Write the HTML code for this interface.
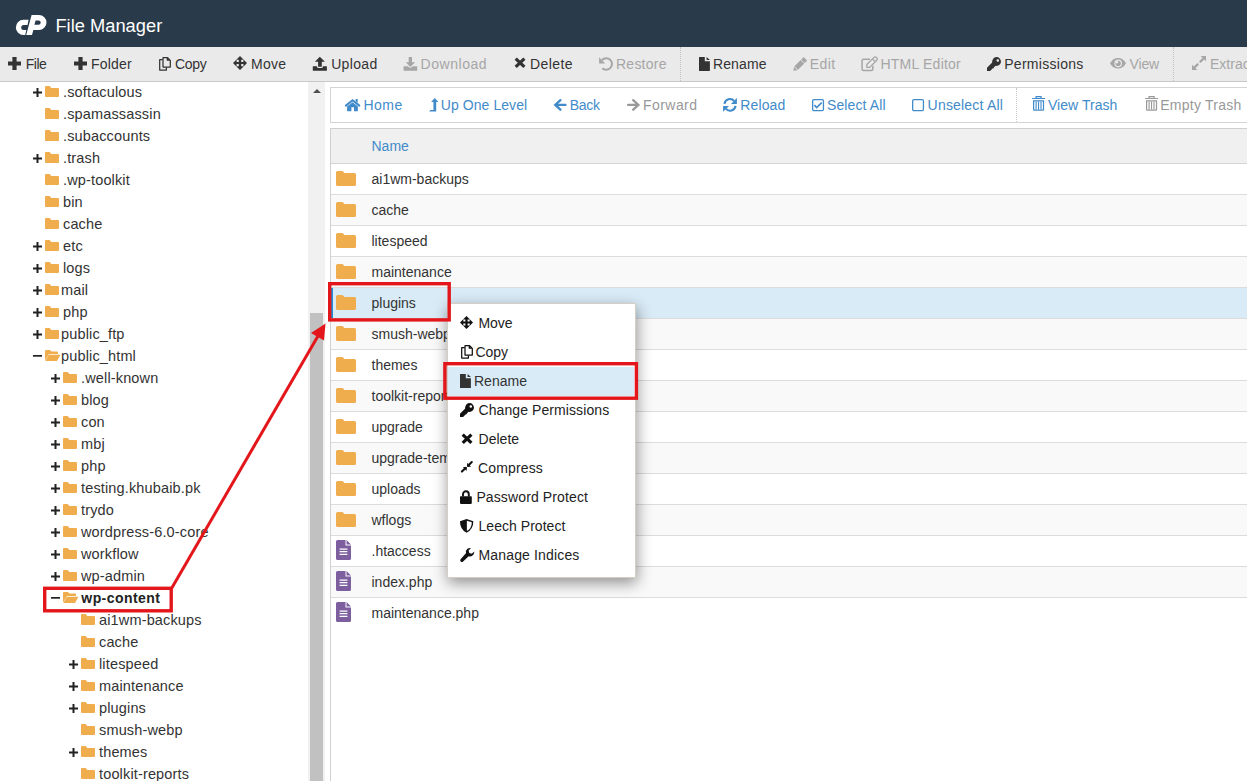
<!DOCTYPE html><html><head><meta charset="utf-8"><style>html,body{margin:0;padding:0}body{width:1247px;height:781px;overflow:hidden;position:relative;background:#fff}</style></head><body><div style="position:absolute;left:0;top:0;width:1247px;height:47px;background:#293a4a"></div><div style="position:absolute;left:55.40px;top:15px;font:normal 18.3px 'Liberation Sans', sans-serif;line-height:21px;color:#fff;white-space:nowrap;letter-spacing:0.014px">File Manager</div><svg style="position:absolute;left:12px;top:10px;overflow:visible" width="40" height="30" viewBox="0 0 40 30" fill="#333" stroke="none"><path d="M16.6 9.8L11.45 9.8A7.6 7.6 0 0 0 11.45 25L13.2 25L14.35 20L11.7 20A2.5 2.5 0 0 1 11.7 15L15.5 15Z" fill="#fff"/><path d="M19.6 5L27 5A7.5 7.5 0 0 1 27 20L21.35 20L20 25L14.2 25Z M23.6 10.4L26.5 10.4A2.2 2.2 0 0 1 26.5 14.8L22.4 14.8Z" fill="#fff" fill-rule="evenodd"/></svg><div style="position:absolute;left:0;top:47px;width:1247px;height:34px;background:#eaeaea;border-bottom:1px solid #c9c9c9"></div><svg style="position:absolute;left:7.9px;top:56.7px;overflow:visible" width="13" height="13" viewBox="0 0 13 13" fill="#333" stroke="none"><path d="M4.4 0H8.6V4.4H13V8.6H8.6V13H4.4V8.6H0V4.4H4.4Z" fill="#333"/></svg><div style="position:absolute;left:25.80px;top:56px;font:normal 14px 'Liberation Sans', sans-serif;line-height:16px;color:#333;white-space:nowrap;letter-spacing:-0.540px">File</div><svg style="position:absolute;left:73.9px;top:56.7px;overflow:visible" width="13" height="13" viewBox="0 0 13 13" fill="#333" stroke="none"><path d="M4.4 0H8.6V4.4H13V8.6H8.6V13H4.4V8.6H0V4.4H4.4Z" fill="#333"/></svg><div style="position:absolute;left:91.00px;top:56px;font:normal 14px 'Liberation Sans', sans-serif;line-height:16px;color:#333;white-space:nowrap;letter-spacing:0.180px">Folder</div><svg style="position:absolute;left:158px;top:56px;overflow:visible" width="14" height="16" viewBox="0 0 14 16" fill="#333" stroke="none"><path d="M5 1.7H9.6L12.3 4.4V11H5Z M9.3 1.7V4.2H12.3" fill="none" stroke="#333" stroke-width="1.25" stroke-linejoin="round"/><path d="M4.7 3.7H1.7V14.1H8.4V11.4" fill="none" stroke="#333" stroke-width="1.25" stroke-linejoin="round"/></svg><div style="position:absolute;left:175.00px;top:56px;font:normal 14px 'Liberation Sans', sans-serif;line-height:16px;color:#333;white-space:nowrap;letter-spacing:-0.300px">Copy</div><svg style="position:absolute;left:233.3px;top:56.1px;overflow:visible" width="14" height="14" viewBox="0 0 14 14" fill="#333" stroke="none"><path transform="scale(1.0)" fill-rule="evenodd" fill="#333" d="M7 0L14 7L7 14L0 7Z M3.6 3.8H5.8V6H3.6Z M8.2 3.8H10.4V6H8.2Z M3.6 8H5.8V10.2H3.6Z M8.2 8H10.4V10.2H8.2Z"/></svg><div style="position:absolute;left:251.00px;top:56px;font:normal 14px 'Liberation Sans', sans-serif;line-height:16px;color:#333;white-space:nowrap;letter-spacing:0.300px">Move</div><svg style="position:absolute;left:312px;top:56px;overflow:visible" width="15" height="15" viewBox="0 0 15 15" fill="#333" stroke="none"><path fill="#333" d="M7.8 0.8L12.9 5.7H2.9Z M6.1 5.5H9.8V10.8H6.1Z M0.8 10.3H5.1V11Q5.1 12 6.1 12H9.8Q10.8 12 10.8 11V10.3H14.9V14.7H0.8Z"/></svg><div style="position:absolute;left:331.20px;top:56px;font:normal 14px 'Liberation Sans', sans-serif;line-height:16px;color:#333;white-space:nowrap;letter-spacing:0.324px">Upload</div><svg style="position:absolute;left:403px;top:56px;overflow:visible" width="15" height="15" viewBox="0 0 15 15" fill="#333" stroke="none"><path fill="#a6a6a6" d="M5.7 1.1H9V6.2H12.1L7.4 10.9L2.7 6.2H5.7Z M0.6 10.3H4.7L7.4 12L10.1 10.3H14.2V14.7H0.6Z"/></svg><div style="position:absolute;left:420.60px;top:56px;font:normal 14px 'Liberation Sans', sans-serif;line-height:16px;color:#a6a6a6;white-space:nowrap;letter-spacing:0.542px">Download</div><svg style="position:absolute;left:514.4px;top:57.1px;overflow:visible" width="12" height="12" viewBox="0 0 12 12" fill="#333" stroke="none"><path d="M1.7 1.6L10.4 9.9 M10.4 1.6L1.7 9.9" fill="none" stroke="#333" stroke-width="3.2" /></svg><div style="position:absolute;left:530.00px;top:56px;font:normal 14px 'Liberation Sans', sans-serif;line-height:16px;color:#333;white-space:nowrap;letter-spacing:0.432px">Delete</div><svg style="position:absolute;left:599px;top:56.5px;overflow:visible" width="14" height="15" viewBox="0 0 14 15" fill="#333" stroke="none"><path fill="#a6a6a6" d="M0.1 0.3V6.4H6.2Z"/><path d="M3 3A5.8 5.8 0 1 1 3.3 11.3" fill="none" stroke="#a6a6a6" stroke-width="2" /></svg><div style="position:absolute;left:616.00px;top:56px;font:normal 14px 'Liberation Sans', sans-serif;line-height:16px;color:#a6a6a6;white-space:nowrap;letter-spacing:0.240px">Restore</div><svg style="position:absolute;left:698.5px;top:56.8px;overflow:visible" width="11" height="14" viewBox="0 0 11 14" fill="#333" stroke="none"><path fill="#333" d="M0 0.3Q0 0 .3 0H5.8V4.3H10.9V13.6Q10.9 13.9 10.6 13.9H.3Q0 13.9 0 13.6Z M7.6 0L10.9 3.1H7.6Z"/></svg><div style="position:absolute;left:712.90px;top:56px;font:normal 14px 'Liberation Sans', sans-serif;line-height:16px;color:#333;white-space:nowrap;letter-spacing:0.144px">Rename</div><svg style="position:absolute;left:792.9px;top:56.8px;overflow:visible" width="14" height="14" viewBox="0 0 14 14" fill="#333" stroke="none"><g transform="translate(0.4 13.8) rotate(-45)" fill="#a6a6a6"><path d="M0 0L3.4 -2.5V2.5Z"/><rect x="4.0" y="-2.5" width="8.8" height="5"/><rect x="13.4" y="-2.5" width="3.6" height="5" rx="1"/></g></svg><div style="position:absolute;left:809.70px;top:56px;font:normal 14px 'Liberation Sans', sans-serif;line-height:16px;color:#a6a6a6;white-space:nowrap;letter-spacing:0.420px">Edit</div><svg style="position:absolute;left:861px;top:56.5px;overflow:visible" width="16" height="15" viewBox="0 0 16 15" fill="#333" stroke="none"><path d="M9 2.35H2.5Q1.05 2.35 1.05 3.8V12Q1.05 13.45 2.5 13.45H10.4Q11.85 13.45 11.85 12V8.8" fill="none" stroke="#a6a6a6" stroke-width="1.5" /><g transform="translate(5.4 10.8) rotate(-45)"><path d="M0.6 0L2.6 -2H12.4A2 2 0 0 1 12.4 2H2.6Z M10.6 -2V2" fill="none" stroke="#a6a6a6" stroke-width="1.3" stroke-linejoin="round"/></g></svg><div style="position:absolute;left:880.40px;top:56px;font:normal 14px 'Liberation Sans', sans-serif;line-height:16px;color:#a6a6a6;white-space:nowrap;letter-spacing:0.234px">HTML Editor</div><svg style="position:absolute;left:987px;top:56.8px;overflow:visible" width="14" height="14" viewBox="0 0 14 14" fill="#333" stroke="none"><circle cx="9.55" cy="4.5" r="4.4" fill="#333"/><circle cx="10.8" cy="3.6" r="1.25" fill="#eaeaea"/><path fill="#333" d="M0 10.8L6.2 4.6L9.4 7.8L6.8 10.4V11.2H5.8L3.1 13.9H0Z"/></svg><div style="position:absolute;left:1004.20px;top:56px;font:normal 14px 'Liberation Sans', sans-serif;line-height:16px;color:#333;white-space:nowrap;letter-spacing:0.288px">Permissions</div><svg style="position:absolute;left:1109.8px;top:58.4px;overflow:visible" width="16" height="11" viewBox="0 0 16 11" fill="#333" stroke="none"><path fill="#a6a6a6" d="M0 5.25Q3 0 8 0Q13 0 16 5.25Q13 10.5 8 10.5Q3 10.5 0 5.25Z"/><circle cx="8.2" cy="5.4" r="3.8" fill="#eaeaea"/><circle cx="8.2" cy="5.4" r="2.6" fill="#a6a6a6"/><circle cx="7" cy="4.2" r="1.2" fill="#eaeaea"/></svg><div style="position:absolute;left:1129.50px;top:56px;font:normal 14px 'Liberation Sans', sans-serif;line-height:16px;color:#a6a6a6;white-space:nowrap;letter-spacing:-0.120px">View</div><svg style="position:absolute;left:1191.8px;top:56.1px;overflow:visible" width="14" height="14" viewBox="0 0 14 14" fill="#333" stroke="none"><path fill="#a6a6a6" d="M14 0V5.3L8.7 0Z M0 14V8.7L5.3 14Z"/><path d="M11.3 2.7L8.4 5.6 M2.7 11.3L5.6 8.4" fill="none" stroke="#a6a6a6" stroke-width="2.2" stroke-linecap="round"/></svg><div style="position:absolute;left:1210.00px;top:56px;font:normal 14px 'Liberation Sans', sans-serif;line-height:16px;color:#a6a6a6;white-space:nowrap;letter-spacing:0.000px">Extract</div><div style="position:absolute;left:680px;top:47px;width:0;height:34px;border-left:1px dotted #c0c0c0"></div><div style="position:absolute;left:1173px;top:47px;width:0;height:34px;border-left:1px dotted #c0c0c0"></div><svg style="position:absolute;left:32.8px;top:87.8px;overflow:visible" width="9" height="9" viewBox="0 0 9 9" fill="#333" stroke="none"><path d="M3.5 0H5.5V3.5H9V5.5H5.5V9H3.5V5.5H0V3.5H3.5Z" fill="#222"/></svg><svg style="position:absolute;left:45px;top:86.3px;overflow:visible" width="14" height="11" viewBox="0 0 14 11" fill="#333" stroke="none"><path fill="#f0ad4e" d="M0 1Q0 0 1 0H4.6L6.4 1.9H13Q14 1.9 14 2.9V10Q14 11 13 11H1Q0 11 0 10Z"/></svg><div style="position:absolute;left:63.00px;top:84px;font:normal 14.5px 'Liberation Sans', sans-serif;line-height:16px;color:#333;white-space:nowrap;letter-spacing:0.150px">.softaculous</div><svg style="position:absolute;left:45px;top:108.3px;overflow:visible" width="14" height="11" viewBox="0 0 14 11" fill="#333" stroke="none"><path fill="#f0ad4e" d="M0 1Q0 0 1 0H4.6L6.4 1.9H13Q14 1.9 14 2.9V10Q14 11 13 11H1Q0 11 0 10Z"/></svg><div style="position:absolute;left:63.00px;top:106px;font:normal 14.5px 'Liberation Sans', sans-serif;line-height:16px;color:#333;white-space:nowrap;letter-spacing:0.150px">.spamassassin</div><svg style="position:absolute;left:45px;top:130.3px;overflow:visible" width="14" height="11" viewBox="0 0 14 11" fill="#333" stroke="none"><path fill="#f0ad4e" d="M0 1Q0 0 1 0H4.6L6.4 1.9H13Q14 1.9 14 2.9V10Q14 11 13 11H1Q0 11 0 10Z"/></svg><div style="position:absolute;left:63.00px;top:128px;font:normal 14.5px 'Liberation Sans', sans-serif;line-height:16px;color:#333;white-space:nowrap;letter-spacing:0.150px">.subaccounts</div><svg style="position:absolute;left:32.8px;top:153.8px;overflow:visible" width="9" height="9" viewBox="0 0 9 9" fill="#333" stroke="none"><path d="M3.5 0H5.5V3.5H9V5.5H5.5V9H3.5V5.5H0V3.5H3.5Z" fill="#222"/></svg><svg style="position:absolute;left:45px;top:152.3px;overflow:visible" width="14" height="11" viewBox="0 0 14 11" fill="#333" stroke="none"><path fill="#f0ad4e" d="M0 1Q0 0 1 0H4.6L6.4 1.9H13Q14 1.9 14 2.9V10Q14 11 13 11H1Q0 11 0 10Z"/></svg><div style="position:absolute;left:63.00px;top:150px;font:normal 14.5px 'Liberation Sans', sans-serif;line-height:16px;color:#333;white-space:nowrap;letter-spacing:0.150px">.trash</div><svg style="position:absolute;left:45px;top:174.3px;overflow:visible" width="14" height="11" viewBox="0 0 14 11" fill="#333" stroke="none"><path fill="#f0ad4e" d="M0 1Q0 0 1 0H4.6L6.4 1.9H13Q14 1.9 14 2.9V10Q14 11 13 11H1Q0 11 0 10Z"/></svg><div style="position:absolute;left:63.00px;top:172px;font:normal 14.5px 'Liberation Sans', sans-serif;line-height:16px;color:#333;white-space:nowrap;letter-spacing:0.150px">.wp-toolkit</div><svg style="position:absolute;left:45px;top:196.3px;overflow:visible" width="14" height="11" viewBox="0 0 14 11" fill="#333" stroke="none"><path fill="#f0ad4e" d="M0 1Q0 0 1 0H4.6L6.4 1.9H13Q14 1.9 14 2.9V10Q14 11 13 11H1Q0 11 0 10Z"/></svg><div style="position:absolute;left:63.00px;top:194px;font:normal 14.5px 'Liberation Sans', sans-serif;line-height:16px;color:#333;white-space:nowrap;letter-spacing:0.150px">bin</div><svg style="position:absolute;left:45px;top:218.3px;overflow:visible" width="14" height="11" viewBox="0 0 14 11" fill="#333" stroke="none"><path fill="#f0ad4e" d="M0 1Q0 0 1 0H4.6L6.4 1.9H13Q14 1.9 14 2.9V10Q14 11 13 11H1Q0 11 0 10Z"/></svg><div style="position:absolute;left:63.00px;top:216px;font:normal 14.5px 'Liberation Sans', sans-serif;line-height:16px;color:#333;white-space:nowrap;letter-spacing:0.150px">cache</div><svg style="position:absolute;left:32.8px;top:241.8px;overflow:visible" width="9" height="9" viewBox="0 0 9 9" fill="#333" stroke="none"><path d="M3.5 0H5.5V3.5H9V5.5H5.5V9H3.5V5.5H0V3.5H3.5Z" fill="#222"/></svg><svg style="position:absolute;left:45px;top:240.3px;overflow:visible" width="14" height="11" viewBox="0 0 14 11" fill="#333" stroke="none"><path fill="#f0ad4e" d="M0 1Q0 0 1 0H4.6L6.4 1.9H13Q14 1.9 14 2.9V10Q14 11 13 11H1Q0 11 0 10Z"/></svg><div style="position:absolute;left:63.00px;top:238px;font:normal 14.5px 'Liberation Sans', sans-serif;line-height:16px;color:#333;white-space:nowrap;letter-spacing:0.150px">etc</div><svg style="position:absolute;left:32.8px;top:263.8px;overflow:visible" width="9" height="9" viewBox="0 0 9 9" fill="#333" stroke="none"><path d="M3.5 0H5.5V3.5H9V5.5H5.5V9H3.5V5.5H0V3.5H3.5Z" fill="#222"/></svg><svg style="position:absolute;left:45px;top:262.3px;overflow:visible" width="14" height="11" viewBox="0 0 14 11" fill="#333" stroke="none"><path fill="#f0ad4e" d="M0 1Q0 0 1 0H4.6L6.4 1.9H13Q14 1.9 14 2.9V10Q14 11 13 11H1Q0 11 0 10Z"/></svg><div style="position:absolute;left:63.00px;top:260px;font:normal 14.5px 'Liberation Sans', sans-serif;line-height:16px;color:#333;white-space:nowrap;letter-spacing:0.150px">logs</div><svg style="position:absolute;left:32.8px;top:285.8px;overflow:visible" width="9" height="9" viewBox="0 0 9 9" fill="#333" stroke="none"><path d="M3.5 0H5.5V3.5H9V5.5H5.5V9H3.5V5.5H0V3.5H3.5Z" fill="#222"/></svg><svg style="position:absolute;left:45px;top:284.3px;overflow:visible" width="14" height="11" viewBox="0 0 14 11" fill="#333" stroke="none"><path fill="#f0ad4e" d="M0 1Q0 0 1 0H4.6L6.4 1.9H13Q14 1.9 14 2.9V10Q14 11 13 11H1Q0 11 0 10Z"/></svg><div style="position:absolute;left:61.00px;top:282px;font:normal 14.5px 'Liberation Sans', sans-serif;line-height:16px;color:#333;white-space:nowrap;letter-spacing:0.150px">mail</div><svg style="position:absolute;left:32.8px;top:307.8px;overflow:visible" width="9" height="9" viewBox="0 0 9 9" fill="#333" stroke="none"><path d="M3.5 0H5.5V3.5H9V5.5H5.5V9H3.5V5.5H0V3.5H3.5Z" fill="#222"/></svg><svg style="position:absolute;left:45px;top:306.3px;overflow:visible" width="14" height="11" viewBox="0 0 14 11" fill="#333" stroke="none"><path fill="#f0ad4e" d="M0 1Q0 0 1 0H4.6L6.4 1.9H13Q14 1.9 14 2.9V10Q14 11 13 11H1Q0 11 0 10Z"/></svg><div style="position:absolute;left:63.00px;top:304px;font:normal 14.5px 'Liberation Sans', sans-serif;line-height:16px;color:#333;white-space:nowrap;letter-spacing:0.150px">php</div><svg style="position:absolute;left:32.8px;top:329.8px;overflow:visible" width="9" height="9" viewBox="0 0 9 9" fill="#333" stroke="none"><path d="M3.5 0H5.5V3.5H9V5.5H5.5V9H3.5V5.5H0V3.5H3.5Z" fill="#222"/></svg><svg style="position:absolute;left:45px;top:328.3px;overflow:visible" width="14" height="11" viewBox="0 0 14 11" fill="#333" stroke="none"><path fill="#f0ad4e" d="M0 1Q0 0 1 0H4.6L6.4 1.9H13Q14 1.9 14 2.9V10Q14 11 13 11H1Q0 11 0 10Z"/></svg><div style="position:absolute;left:61.00px;top:326px;font:normal 14.5px 'Liberation Sans', sans-serif;line-height:16px;color:#333;white-space:nowrap;letter-spacing:0.150px">public_ftp</div><svg style="position:absolute;left:32.8px;top:354.8px;overflow:visible" width="9" height="2" viewBox="0 0 9 2" fill="#333" stroke="none"><rect width="9" height="1.7" fill="#222"/></svg><svg style="position:absolute;left:45px;top:350.3px;overflow:visible" width="16" height="11" viewBox="0 0 16 11" fill="#333" stroke="none"><path fill="#f0ad4e" d="M0 1Q0 0 1 0H5L6.5 1.5H12Q13 1.5 13 2.5V4H4L0 10.5Z M3.8 4.8H15.5L12 11H0.3Z"/></svg><div style="position:absolute;left:61.00px;top:348px;font:normal 14.5px 'Liberation Sans', sans-serif;line-height:16px;color:#333;white-space:nowrap;letter-spacing:0.150px">public_html</div><svg style="position:absolute;left:50.8px;top:373.8px;overflow:visible" width="9" height="9" viewBox="0 0 9 9" fill="#333" stroke="none"><path d="M3.5 0H5.5V3.5H9V5.5H5.5V9H3.5V5.5H0V3.5H3.5Z" fill="#222"/></svg><svg style="position:absolute;left:63px;top:372.3px;overflow:visible" width="14" height="11" viewBox="0 0 14 11" fill="#333" stroke="none"><path fill="#f0ad4e" d="M0 1Q0 0 1 0H4.6L6.4 1.9H13Q14 1.9 14 2.9V10Q14 11 13 11H1Q0 11 0 10Z"/></svg><div style="position:absolute;left:81.00px;top:370px;font:normal 14.5px 'Liberation Sans', sans-serif;line-height:16px;color:#333;white-space:nowrap;letter-spacing:0.150px">.well-known</div><svg style="position:absolute;left:50.8px;top:395.8px;overflow:visible" width="9" height="9" viewBox="0 0 9 9" fill="#333" stroke="none"><path d="M3.5 0H5.5V3.5H9V5.5H5.5V9H3.5V5.5H0V3.5H3.5Z" fill="#222"/></svg><svg style="position:absolute;left:63px;top:394.3px;overflow:visible" width="14" height="11" viewBox="0 0 14 11" fill="#333" stroke="none"><path fill="#f0ad4e" d="M0 1Q0 0 1 0H4.6L6.4 1.9H13Q14 1.9 14 2.9V10Q14 11 13 11H1Q0 11 0 10Z"/></svg><div style="position:absolute;left:81.00px;top:392px;font:normal 14.5px 'Liberation Sans', sans-serif;line-height:16px;color:#333;white-space:nowrap;letter-spacing:0.150px">blog</div><svg style="position:absolute;left:50.8px;top:417.8px;overflow:visible" width="9" height="9" viewBox="0 0 9 9" fill="#333" stroke="none"><path d="M3.5 0H5.5V3.5H9V5.5H5.5V9H3.5V5.5H0V3.5H3.5Z" fill="#222"/></svg><svg style="position:absolute;left:63px;top:416.3px;overflow:visible" width="14" height="11" viewBox="0 0 14 11" fill="#333" stroke="none"><path fill="#f0ad4e" d="M0 1Q0 0 1 0H4.6L6.4 1.9H13Q14 1.9 14 2.9V10Q14 11 13 11H1Q0 11 0 10Z"/></svg><div style="position:absolute;left:81.00px;top:414px;font:normal 14.5px 'Liberation Sans', sans-serif;line-height:16px;color:#333;white-space:nowrap;letter-spacing:0.150px">con</div><svg style="position:absolute;left:50.8px;top:439.8px;overflow:visible" width="9" height="9" viewBox="0 0 9 9" fill="#333" stroke="none"><path d="M3.5 0H5.5V3.5H9V5.5H5.5V9H3.5V5.5H0V3.5H3.5Z" fill="#222"/></svg><svg style="position:absolute;left:63px;top:438.3px;overflow:visible" width="14" height="11" viewBox="0 0 14 11" fill="#333" stroke="none"><path fill="#f0ad4e" d="M0 1Q0 0 1 0H4.6L6.4 1.9H13Q14 1.9 14 2.9V10Q14 11 13 11H1Q0 11 0 10Z"/></svg><div style="position:absolute;left:81.00px;top:436px;font:normal 14.5px 'Liberation Sans', sans-serif;line-height:16px;color:#333;white-space:nowrap;letter-spacing:0.150px">mbj</div><svg style="position:absolute;left:50.8px;top:461.8px;overflow:visible" width="9" height="9" viewBox="0 0 9 9" fill="#333" stroke="none"><path d="M3.5 0H5.5V3.5H9V5.5H5.5V9H3.5V5.5H0V3.5H3.5Z" fill="#222"/></svg><svg style="position:absolute;left:63px;top:460.3px;overflow:visible" width="14" height="11" viewBox="0 0 14 11" fill="#333" stroke="none"><path fill="#f0ad4e" d="M0 1Q0 0 1 0H4.6L6.4 1.9H13Q14 1.9 14 2.9V10Q14 11 13 11H1Q0 11 0 10Z"/></svg><div style="position:absolute;left:81.00px;top:458px;font:normal 14.5px 'Liberation Sans', sans-serif;line-height:16px;color:#333;white-space:nowrap;letter-spacing:0.150px">php</div><svg style="position:absolute;left:50.8px;top:483.8px;overflow:visible" width="9" height="9" viewBox="0 0 9 9" fill="#333" stroke="none"><path d="M3.5 0H5.5V3.5H9V5.5H5.5V9H3.5V5.5H0V3.5H3.5Z" fill="#222"/></svg><svg style="position:absolute;left:63px;top:482.3px;overflow:visible" width="14" height="11" viewBox="0 0 14 11" fill="#333" stroke="none"><path fill="#f0ad4e" d="M0 1Q0 0 1 0H4.6L6.4 1.9H13Q14 1.9 14 2.9V10Q14 11 13 11H1Q0 11 0 10Z"/></svg><div style="position:absolute;left:81.00px;top:480px;font:normal 14.5px 'Liberation Sans', sans-serif;line-height:16px;color:#333;white-space:nowrap;letter-spacing:0.150px">testing.khubaib.pk</div><svg style="position:absolute;left:50.8px;top:505.8px;overflow:visible" width="9" height="9" viewBox="0 0 9 9" fill="#333" stroke="none"><path d="M3.5 0H5.5V3.5H9V5.5H5.5V9H3.5V5.5H0V3.5H3.5Z" fill="#222"/></svg><svg style="position:absolute;left:63px;top:504.3px;overflow:visible" width="14" height="11" viewBox="0 0 14 11" fill="#333" stroke="none"><path fill="#f0ad4e" d="M0 1Q0 0 1 0H4.6L6.4 1.9H13Q14 1.9 14 2.9V10Q14 11 13 11H1Q0 11 0 10Z"/></svg><div style="position:absolute;left:81.00px;top:502px;font:normal 14.5px 'Liberation Sans', sans-serif;line-height:16px;color:#333;white-space:nowrap;letter-spacing:0.150px">trydo</div><svg style="position:absolute;left:50.8px;top:527.8px;overflow:visible" width="9" height="9" viewBox="0 0 9 9" fill="#333" stroke="none"><path d="M3.5 0H5.5V3.5H9V5.5H5.5V9H3.5V5.5H0V3.5H3.5Z" fill="#222"/></svg><svg style="position:absolute;left:63px;top:526.3px;overflow:visible" width="14" height="11" viewBox="0 0 14 11" fill="#333" stroke="none"><path fill="#f0ad4e" d="M0 1Q0 0 1 0H4.6L6.4 1.9H13Q14 1.9 14 2.9V10Q14 11 13 11H1Q0 11 0 10Z"/></svg><div style="position:absolute;left:81.00px;top:524px;font:normal 14.5px 'Liberation Sans', sans-serif;line-height:16px;color:#333;white-space:nowrap;letter-spacing:0.150px">wordpress-6.0-core</div><svg style="position:absolute;left:50.8px;top:549.8px;overflow:visible" width="9" height="9" viewBox="0 0 9 9" fill="#333" stroke="none"><path d="M3.5 0H5.5V3.5H9V5.5H5.5V9H3.5V5.5H0V3.5H3.5Z" fill="#222"/></svg><svg style="position:absolute;left:63px;top:548.3px;overflow:visible" width="14" height="11" viewBox="0 0 14 11" fill="#333" stroke="none"><path fill="#f0ad4e" d="M0 1Q0 0 1 0H4.6L6.4 1.9H13Q14 1.9 14 2.9V10Q14 11 13 11H1Q0 11 0 10Z"/></svg><div style="position:absolute;left:81.00px;top:546px;font:normal 14.5px 'Liberation Sans', sans-serif;line-height:16px;color:#333;white-space:nowrap;letter-spacing:0.150px">workflow</div><svg style="position:absolute;left:50.8px;top:571.8px;overflow:visible" width="9" height="9" viewBox="0 0 9 9" fill="#333" stroke="none"><path d="M3.5 0H5.5V3.5H9V5.5H5.5V9H3.5V5.5H0V3.5H3.5Z" fill="#222"/></svg><svg style="position:absolute;left:63px;top:570.3px;overflow:visible" width="14" height="11" viewBox="0 0 14 11" fill="#333" stroke="none"><path fill="#f0ad4e" d="M0 1Q0 0 1 0H4.6L6.4 1.9H13Q14 1.9 14 2.9V10Q14 11 13 11H1Q0 11 0 10Z"/></svg><div style="position:absolute;left:81.00px;top:568px;font:normal 14.5px 'Liberation Sans', sans-serif;line-height:16px;color:#333;white-space:nowrap;letter-spacing:0.150px">wp-admin</div><svg style="position:absolute;left:50.8px;top:596.8px;overflow:visible" width="9" height="2" viewBox="0 0 9 2" fill="#333" stroke="none"><rect width="9" height="1.7" fill="#222"/></svg><svg style="position:absolute;left:63px;top:592.3px;overflow:visible" width="16" height="11" viewBox="0 0 16 11" fill="#333" stroke="none"><path fill="#f0ad4e" d="M0 1Q0 0 1 0H5L6.5 1.5H12Q13 1.5 13 2.5V4H4L0 10.5Z M3.8 4.8H15.5L12 11H0.3Z"/></svg><div style="position:absolute;left:81.30px;top:590px;font:bold 14px 'Liberation Sans', sans-serif;line-height:16px;color:#222;white-space:nowrap;letter-spacing:0.440px">wp-content</div><svg style="position:absolute;left:81px;top:614.3px;overflow:visible" width="14" height="11" viewBox="0 0 14 11" fill="#333" stroke="none"><path fill="#f0ad4e" d="M0 1Q0 0 1 0H4.6L6.4 1.9H13Q14 1.9 14 2.9V10Q14 11 13 11H1Q0 11 0 10Z"/></svg><div style="position:absolute;left:99.00px;top:612px;font:normal 14.5px 'Liberation Sans', sans-serif;line-height:16px;color:#333;white-space:nowrap;letter-spacing:0.150px">ai1wm-backups</div><svg style="position:absolute;left:81px;top:636.3px;overflow:visible" width="14" height="11" viewBox="0 0 14 11" fill="#333" stroke="none"><path fill="#f0ad4e" d="M0 1Q0 0 1 0H4.6L6.4 1.9H13Q14 1.9 14 2.9V10Q14 11 13 11H1Q0 11 0 10Z"/></svg><div style="position:absolute;left:99.00px;top:634px;font:normal 14.5px 'Liberation Sans', sans-serif;line-height:16px;color:#333;white-space:nowrap;letter-spacing:0.150px">cache</div><svg style="position:absolute;left:68.8px;top:659.8px;overflow:visible" width="9" height="9" viewBox="0 0 9 9" fill="#333" stroke="none"><path d="M3.5 0H5.5V3.5H9V5.5H5.5V9H3.5V5.5H0V3.5H3.5Z" fill="#222"/></svg><svg style="position:absolute;left:81px;top:658.3px;overflow:visible" width="14" height="11" viewBox="0 0 14 11" fill="#333" stroke="none"><path fill="#f0ad4e" d="M0 1Q0 0 1 0H4.6L6.4 1.9H13Q14 1.9 14 2.9V10Q14 11 13 11H1Q0 11 0 10Z"/></svg><div style="position:absolute;left:99.00px;top:656px;font:normal 14.5px 'Liberation Sans', sans-serif;line-height:16px;color:#333;white-space:nowrap;letter-spacing:0.150px">litespeed</div><svg style="position:absolute;left:68.8px;top:681.8px;overflow:visible" width="9" height="9" viewBox="0 0 9 9" fill="#333" stroke="none"><path d="M3.5 0H5.5V3.5H9V5.5H5.5V9H3.5V5.5H0V3.5H3.5Z" fill="#222"/></svg><svg style="position:absolute;left:81px;top:680.3px;overflow:visible" width="14" height="11" viewBox="0 0 14 11" fill="#333" stroke="none"><path fill="#f0ad4e" d="M0 1Q0 0 1 0H4.6L6.4 1.9H13Q14 1.9 14 2.9V10Q14 11 13 11H1Q0 11 0 10Z"/></svg><div style="position:absolute;left:99.00px;top:678px;font:normal 14.5px 'Liberation Sans', sans-serif;line-height:16px;color:#333;white-space:nowrap;letter-spacing:0.150px">maintenance</div><svg style="position:absolute;left:68.8px;top:703.8px;overflow:visible" width="9" height="9" viewBox="0 0 9 9" fill="#333" stroke="none"><path d="M3.5 0H5.5V3.5H9V5.5H5.5V9H3.5V5.5H0V3.5H3.5Z" fill="#222"/></svg><svg style="position:absolute;left:81px;top:702.3px;overflow:visible" width="14" height="11" viewBox="0 0 14 11" fill="#333" stroke="none"><path fill="#f0ad4e" d="M0 1Q0 0 1 0H4.6L6.4 1.9H13Q14 1.9 14 2.9V10Q14 11 13 11H1Q0 11 0 10Z"/></svg><div style="position:absolute;left:99.00px;top:700px;font:normal 14.5px 'Liberation Sans', sans-serif;line-height:16px;color:#333;white-space:nowrap;letter-spacing:0.150px">plugins</div><svg style="position:absolute;left:81px;top:724.3px;overflow:visible" width="14" height="11" viewBox="0 0 14 11" fill="#333" stroke="none"><path fill="#f0ad4e" d="M0 1Q0 0 1 0H4.6L6.4 1.9H13Q14 1.9 14 2.9V10Q14 11 13 11H1Q0 11 0 10Z"/></svg><div style="position:absolute;left:99.00px;top:722px;font:normal 14.5px 'Liberation Sans', sans-serif;line-height:16px;color:#333;white-space:nowrap;letter-spacing:0.150px">smush-webp</div><svg style="position:absolute;left:68.8px;top:747.8px;overflow:visible" width="9" height="9" viewBox="0 0 9 9" fill="#333" stroke="none"><path d="M3.5 0H5.5V3.5H9V5.5H5.5V9H3.5V5.5H0V3.5H3.5Z" fill="#222"/></svg><svg style="position:absolute;left:81px;top:746.3px;overflow:visible" width="14" height="11" viewBox="0 0 14 11" fill="#333" stroke="none"><path fill="#f0ad4e" d="M0 1Q0 0 1 0H4.6L6.4 1.9H13Q14 1.9 14 2.9V10Q14 11 13 11H1Q0 11 0 10Z"/></svg><div style="position:absolute;left:99.00px;top:744px;font:normal 14.5px 'Liberation Sans', sans-serif;line-height:16px;color:#333;white-space:nowrap;letter-spacing:0.150px">themes</div><svg style="position:absolute;left:81px;top:768.3px;overflow:visible" width="14" height="11" viewBox="0 0 14 11" fill="#333" stroke="none"><path fill="#f0ad4e" d="M0 1Q0 0 1 0H4.6L6.4 1.9H13Q14 1.9 14 2.9V10Q14 11 13 11H1Q0 11 0 10Z"/></svg><div style="position:absolute;left:99.00px;top:766px;font:normal 14.5px 'Liberation Sans', sans-serif;line-height:16px;color:#333;white-space:nowrap;letter-spacing:0.150px">toolkit-reports</div><div style="position:absolute;left:308px;top:82px;width:17px;height:699px;background:#f1f1f1"></div><div style="position:absolute;left:310px;top:313px;width:13px;height:468px;background:#c1c1c1"></div><svg style="position:absolute;left:312.8px;top:89.2px;overflow:visible" width="8" height="4" viewBox="0 0 8 4" fill="#333" stroke="none"><path d="M4 0L8 4H0Z" fill="#505050"/></svg><div style="position:absolute;left:330px;top:87px;width:930px;height:34px;border:1px solid #d4d4d4;background:#fff"></div><svg style="position:absolute;left:344.9px;top:99.1px;overflow:visible" width="16" height="13" viewBox="0 0 16 13" fill="#333" stroke="none"><path d="M0.9 6.6L7.6 1.3L14.3 6.6" fill="none" stroke="#428bca" stroke-width="2.1" stroke-linecap="round"/><path fill="#428bca" d="M10.6 0.1H12.7V3.8L10.6 2.2Z M2.1 7.4L7.6 3.3L12.9 7.4V12.2H9V8.3H6.4V12.2H2.1Z"/></svg><div style="position:absolute;left:363.40px;top:97px;font:normal 14px 'Liberation Sans', sans-serif;line-height:16px;color:#428bca;white-space:nowrap;letter-spacing:0.540px">Home</div><svg style="position:absolute;left:428.7px;top:98px;overflow:visible" width="10" height="14" viewBox="0 0 10 14" fill="#333" stroke="none"><path fill="#428bca" d="M5.8 0.1L9.4 3.9H7.2V13.6H0.2L1.4 11.9H4.4V3.9H2.1Z"/></svg><div style="position:absolute;left:440.80px;top:97px;font:normal 14px 'Liberation Sans', sans-serif;line-height:16px;color:#428bca;white-space:nowrap;letter-spacing:0.068px">Up One Level</div><svg style="position:absolute;left:554px;top:98.8px;overflow:visible" width="13" height="12" viewBox="0 0 13 12" fill="#333" stroke="none"><path d="M6.4 1.1L1.2 5.9L6.4 10.7 M1.8 5.9H11.5" fill="none" stroke="#428bca" stroke-width="2.3" stroke-linecap="round" stroke-linejoin="miter"/></svg><div style="position:absolute;left:569.70px;top:97px;font:normal 14px 'Liberation Sans', sans-serif;line-height:16px;color:#428bca;white-space:nowrap;letter-spacing:-0.300px">Back</div><svg style="position:absolute;left:627px;top:98.8px;overflow:visible" width="13" height="12" viewBox="0 0 13 12" fill="#333" stroke="none"><path d="M6.2 1.1L11.4 5.9L6.2 10.7 M11 5.9H1.1" fill="none" stroke="#999" stroke-width="2.3" stroke-linecap="round" stroke-linejoin="miter"/></svg><div style="position:absolute;left:643.10px;top:97px;font:normal 14px 'Liberation Sans', sans-serif;line-height:16px;color:#999;white-space:nowrap;letter-spacing:0.420px">Forward</div><svg style="position:absolute;left:723px;top:97.8px;overflow:visible" width="14" height="14" viewBox="0 0 14 14" fill="#333" stroke="none"><path d="M1.5 5.9A5.5 5.5 0 0 1 11.2 3.1 M12.5 7.9A5.5 5.5 0 0 1 2.8 10.7" fill="none" stroke="#428bca" stroke-width="2.1" /><path fill="#428bca" d="M13.9 0V5.9H8Z M0.1 13.8V7.9H6Z"/></svg><div style="position:absolute;left:740.30px;top:97px;font:normal 14px 'Liberation Sans', sans-serif;line-height:16px;color:#428bca;white-space:nowrap;letter-spacing:0.108px">Reload</div><svg style="position:absolute;left:811.8px;top:98.6px;overflow:visible" width="13" height="13" viewBox="0 0 13 13" fill="#333" stroke="none"><rect x="0.65" y="0.65" width="10.8" height="11" rx="1.3" fill="none" stroke="#428bca" stroke-width="1.3"/><path d="M2.4 6.1L4.7 8.6L9.7 3.6" fill="none" stroke="#428bca" stroke-width="1.6" /></svg><div style="position:absolute;left:827.00px;top:97px;font:normal 14px 'Liberation Sans', sans-serif;line-height:16px;color:#428bca;white-space:nowrap;letter-spacing:0.100px">Select All</div><svg style="position:absolute;left:911.5px;top:98.6px;overflow:visible" width="13" height="13" viewBox="0 0 13 13" fill="#333" stroke="none"><rect x="0.65" y="0.65" width="10.8" height="11" rx="1.3" fill="none" stroke="#428bca" stroke-width="1.3"/></svg><div style="position:absolute;left:927.60px;top:97px;font:normal 14px 'Liberation Sans', sans-serif;line-height:16px;color:#428bca;white-space:nowrap;letter-spacing:0.195px">Unselect All</div><svg style="position:absolute;left:1031.6px;top:96px;overflow:visible" width="14" height="15" viewBox="0 0 14 15" fill="#333" stroke="none"><path d="M0.1 2.5H13.1 M4.1 2.5V0.7H9.1V2.5" fill="none" stroke="#428bca" stroke-width="1.2" /><path d="M1.6 4.9V13.5Q1.6 14.1 2.2 14.1H10.9Q11.5 14.1 11.5 13.5V4.9Z" fill="none" stroke="#428bca" stroke-width="1.2" /><path d="M4.1 5.5V13.5 M6.55 5.5V13.5 M9.0 5.5V13.5" fill="none" stroke="#428bca" stroke-width="1.1" /></svg><div style="position:absolute;left:1048.00px;top:97px;font:normal 14px 'Liberation Sans', sans-serif;line-height:16px;color:#428bca;white-space:nowrap;letter-spacing:0.040px">View Trash</div><svg style="position:absolute;left:1144.6px;top:96px;overflow:visible" width="14" height="15" viewBox="0 0 14 15" fill="#333" stroke="none"><path d="M0.1 2.5H13.1 M4.1 2.5V0.7H9.1V2.5" fill="none" stroke="#999" stroke-width="1.2" /><path d="M1.6 4.9V13.5Q1.6 14.1 2.2 14.1H10.9Q11.5 14.1 11.5 13.5V4.9Z" fill="none" stroke="#999" stroke-width="1.2" /><path d="M4.1 5.5V13.5 M6.55 5.5V13.5 M9.0 5.5V13.5" fill="none" stroke="#999" stroke-width="1.1" /></svg><div style="position:absolute;left:1160.30px;top:97px;font:normal 14px 'Liberation Sans', sans-serif;line-height:16px;color:#999;white-space:nowrap;letter-spacing:0.234px">Empty Trash</div><div style="position:absolute;left:1016px;top:88px;width:0;height:34px;border-left:1px dotted #c8c8c8"></div><div style="position:absolute;left:330px;top:128px;width:930px;height:700px;border-left:1px solid #d0d0d0;border-top:1px solid #d0d0d0"></div><div style="position:absolute;left:331px;top:129px;width:930px;height:34px;background:#f0f0f0;border-bottom:1px solid #d4d4d4"></div><div style="position:absolute;left:371.50px;top:138px;font:normal 14px 'Liberation Sans', sans-serif;line-height:16px;color:#428bca;white-space:nowrap;letter-spacing:0.000px">Name</div><div style="position:absolute;left:331px;top:164px;width:930px;height:30px;background:#fff;border-bottom:1px solid #dcdcdc;"></div><svg style="position:absolute;left:336px;top:171px;overflow:visible" width="20" height="15" viewBox="0 0 20 15" fill="#333" stroke="none"><path fill="#f0ad4e" d="M0 1.5Q0 0 1.5 0H6.5L8.5 2H18.5Q20 2 20 3.5V13.5Q20 15 18.5 15H1.5Q0 15 0 13.5Z"/></svg><div style="position:absolute;left:371.50px;top:171px;font:normal 14px 'Liberation Sans', sans-serif;line-height:16px;color:#333;white-space:nowrap;letter-spacing:0.000px">ai1wm-backups</div><div style="position:absolute;left:331px;top:195px;width:930px;height:30px;background:#f9f9f9;border-bottom:1px solid #dcdcdc;"></div><svg style="position:absolute;left:336px;top:202px;overflow:visible" width="20" height="15" viewBox="0 0 20 15" fill="#333" stroke="none"><path fill="#f0ad4e" d="M0 1.5Q0 0 1.5 0H6.5L8.5 2H18.5Q20 2 20 3.5V13.5Q20 15 18.5 15H1.5Q0 15 0 13.5Z"/></svg><div style="position:absolute;left:371.50px;top:202px;font:normal 14px 'Liberation Sans', sans-serif;line-height:16px;color:#333;white-space:nowrap;letter-spacing:0.000px">cache</div><div style="position:absolute;left:331px;top:226px;width:930px;height:30px;background:#fff;border-bottom:1px solid #dcdcdc;"></div><svg style="position:absolute;left:336px;top:233px;overflow:visible" width="20" height="15" viewBox="0 0 20 15" fill="#333" stroke="none"><path fill="#f0ad4e" d="M0 1.5Q0 0 1.5 0H6.5L8.5 2H18.5Q20 2 20 3.5V13.5Q20 15 18.5 15H1.5Q0 15 0 13.5Z"/></svg><div style="position:absolute;left:371.50px;top:233px;font:normal 14px 'Liberation Sans', sans-serif;line-height:16px;color:#333;white-space:nowrap;letter-spacing:0.000px">litespeed</div><div style="position:absolute;left:331px;top:257px;width:930px;height:30px;background:#f9f9f9;border-bottom:1px solid #dcdcdc;"></div><svg style="position:absolute;left:336px;top:264px;overflow:visible" width="20" height="15" viewBox="0 0 20 15" fill="#333" stroke="none"><path fill="#f0ad4e" d="M0 1.5Q0 0 1.5 0H6.5L8.5 2H18.5Q20 2 20 3.5V13.5Q20 15 18.5 15H1.5Q0 15 0 13.5Z"/></svg><div style="position:absolute;left:371.50px;top:264px;font:normal 14px 'Liberation Sans', sans-serif;line-height:16px;color:#333;white-space:nowrap;letter-spacing:0.000px">maintenance</div><div style="position:absolute;left:331px;top:288px;width:930px;height:30px;background:#d9ebf7;border-bottom:1px solid #dcdcdc;"></div><div style="position:absolute;left:331px;top:288px;width:2px;height:30px;background:#1a8fd8"></div><svg style="position:absolute;left:336px;top:295px;overflow:visible" width="20" height="15" viewBox="0 0 20 15" fill="#333" stroke="none"><path fill="#f0ad4e" d="M0 1.5Q0 0 1.5 0H6.5L8.5 2H18.5Q20 2 20 3.5V13.5Q20 15 18.5 15H1.5Q0 15 0 13.5Z"/></svg><div style="position:absolute;left:371.50px;top:295px;font:normal 14px 'Liberation Sans', sans-serif;line-height:16px;color:#333;white-space:nowrap;letter-spacing:0.000px">plugins</div><div style="position:absolute;left:331px;top:319px;width:930px;height:30px;background:#f9f9f9;border-bottom:1px solid #dcdcdc;"></div><svg style="position:absolute;left:336px;top:326px;overflow:visible" width="20" height="15" viewBox="0 0 20 15" fill="#333" stroke="none"><path fill="#f0ad4e" d="M0 1.5Q0 0 1.5 0H6.5L8.5 2H18.5Q20 2 20 3.5V13.5Q20 15 18.5 15H1.5Q0 15 0 13.5Z"/></svg><div style="position:absolute;left:371.50px;top:326px;font:normal 14px 'Liberation Sans', sans-serif;line-height:16px;color:#333;white-space:nowrap;letter-spacing:0.000px">smush-webp</div><div style="position:absolute;left:331px;top:350px;width:930px;height:30px;background:#fff;border-bottom:1px solid #dcdcdc;"></div><svg style="position:absolute;left:336px;top:357px;overflow:visible" width="20" height="15" viewBox="0 0 20 15" fill="#333" stroke="none"><path fill="#f0ad4e" d="M0 1.5Q0 0 1.5 0H6.5L8.5 2H18.5Q20 2 20 3.5V13.5Q20 15 18.5 15H1.5Q0 15 0 13.5Z"/></svg><div style="position:absolute;left:371.50px;top:357px;font:normal 14px 'Liberation Sans', sans-serif;line-height:16px;color:#333;white-space:nowrap;letter-spacing:0.000px">themes</div><div style="position:absolute;left:331px;top:381px;width:930px;height:30px;background:#f9f9f9;border-bottom:1px solid #dcdcdc;"></div><svg style="position:absolute;left:336px;top:388px;overflow:visible" width="20" height="15" viewBox="0 0 20 15" fill="#333" stroke="none"><path fill="#f0ad4e" d="M0 1.5Q0 0 1.5 0H6.5L8.5 2H18.5Q20 2 20 3.5V13.5Q20 15 18.5 15H1.5Q0 15 0 13.5Z"/></svg><div style="position:absolute;left:371.50px;top:388px;font:normal 14px 'Liberation Sans', sans-serif;line-height:16px;color:#333;white-space:nowrap;letter-spacing:0.000px">toolkit-reports</div><div style="position:absolute;left:331px;top:412px;width:930px;height:30px;background:#fff;border-bottom:1px solid #dcdcdc;"></div><svg style="position:absolute;left:336px;top:419px;overflow:visible" width="20" height="15" viewBox="0 0 20 15" fill="#333" stroke="none"><path fill="#f0ad4e" d="M0 1.5Q0 0 1.5 0H6.5L8.5 2H18.5Q20 2 20 3.5V13.5Q20 15 18.5 15H1.5Q0 15 0 13.5Z"/></svg><div style="position:absolute;left:371.50px;top:419px;font:normal 14px 'Liberation Sans', sans-serif;line-height:16px;color:#333;white-space:nowrap;letter-spacing:0.000px">upgrade</div><div style="position:absolute;left:331px;top:443px;width:930px;height:30px;background:#f9f9f9;border-bottom:1px solid #dcdcdc;"></div><svg style="position:absolute;left:336px;top:450px;overflow:visible" width="20" height="15" viewBox="0 0 20 15" fill="#333" stroke="none"><path fill="#f0ad4e" d="M0 1.5Q0 0 1.5 0H6.5L8.5 2H18.5Q20 2 20 3.5V13.5Q20 15 18.5 15H1.5Q0 15 0 13.5Z"/></svg><div style="position:absolute;left:371.50px;top:450px;font:normal 14px 'Liberation Sans', sans-serif;line-height:16px;color:#333;white-space:nowrap;letter-spacing:0.000px">upgrade-temp</div><div style="position:absolute;left:331px;top:474px;width:930px;height:30px;background:#fff;border-bottom:1px solid #dcdcdc;"></div><svg style="position:absolute;left:336px;top:481px;overflow:visible" width="20" height="15" viewBox="0 0 20 15" fill="#333" stroke="none"><path fill="#f0ad4e" d="M0 1.5Q0 0 1.5 0H6.5L8.5 2H18.5Q20 2 20 3.5V13.5Q20 15 18.5 15H1.5Q0 15 0 13.5Z"/></svg><div style="position:absolute;left:371.50px;top:481px;font:normal 14px 'Liberation Sans', sans-serif;line-height:16px;color:#333;white-space:nowrap;letter-spacing:0.000px">uploads</div><div style="position:absolute;left:331px;top:505px;width:930px;height:30px;background:#f9f9f9;border-bottom:1px solid #dcdcdc;"></div><svg style="position:absolute;left:336px;top:512px;overflow:visible" width="20" height="15" viewBox="0 0 20 15" fill="#333" stroke="none"><path fill="#f0ad4e" d="M0 1.5Q0 0 1.5 0H6.5L8.5 2H18.5Q20 2 20 3.5V13.5Q20 15 18.5 15H1.5Q0 15 0 13.5Z"/></svg><div style="position:absolute;left:371.50px;top:512px;font:normal 14px 'Liberation Sans', sans-serif;line-height:16px;color:#333;white-space:nowrap;letter-spacing:0.000px">wflogs</div><div style="position:absolute;left:331px;top:536px;width:930px;height:30px;background:#fff;border-bottom:1px solid #dcdcdc;"></div><svg style="position:absolute;left:336px;top:540.4px;overflow:visible" width="15" height="20" viewBox="0 0 15 20" fill="#333" stroke="none"><path fill="#7d5fa0" d="M0 1.5Q0 0 1.5 0H9.5V5.5H15V18.5Q15 20 13.5 20H1.5Q0 20 0 18.5Z M10.5 0L15 4.5H10.5Z"/><path d="M3.6 9H11.4 M3.6 11.7H11.4 M3.6 14.4H11.4" fill="none" stroke="#fff" stroke-width="1.25" /></svg><div style="position:absolute;left:371.50px;top:543px;font:normal 14px 'Liberation Sans', sans-serif;line-height:16px;color:#333;white-space:nowrap;letter-spacing:0.000px">.htaccess</div><div style="position:absolute;left:331px;top:567px;width:930px;height:30px;background:#f9f9f9;border-bottom:1px solid #dcdcdc;"></div><svg style="position:absolute;left:336px;top:571.4px;overflow:visible" width="15" height="20" viewBox="0 0 15 20" fill="#333" stroke="none"><path fill="#7d5fa0" d="M0 1.5Q0 0 1.5 0H9.5V5.5H15V18.5Q15 20 13.5 20H1.5Q0 20 0 18.5Z M10.5 0L15 4.5H10.5Z"/><path d="M3.6 9H11.4 M3.6 11.7H11.4 M3.6 14.4H11.4" fill="none" stroke="#fff" stroke-width="1.25" /></svg><div style="position:absolute;left:371.50px;top:574px;font:normal 14px 'Liberation Sans', sans-serif;line-height:16px;color:#333;white-space:nowrap;letter-spacing:0.000px">index.php</div><div style="position:absolute;left:331px;top:598px;width:930px;height:30px;background:#fff;"></div><svg style="position:absolute;left:336px;top:602.4px;overflow:visible" width="15" height="20" viewBox="0 0 15 20" fill="#333" stroke="none"><path fill="#7d5fa0" d="M0 1.5Q0 0 1.5 0H9.5V5.5H15V18.5Q15 20 13.5 20H1.5Q0 20 0 18.5Z M10.5 0L15 4.5H10.5Z"/><path d="M3.6 9H11.4 M3.6 11.7H11.4 M3.6 14.4H11.4" fill="none" stroke="#fff" stroke-width="1.25" /></svg><div style="position:absolute;left:371.50px;top:605px;font:normal 14px 'Liberation Sans', sans-serif;line-height:16px;color:#333;white-space:nowrap;letter-spacing:0.000px">maintenance.php</div><div style="position:absolute;left:447px;top:303px;width:187px;height:273px;background:#fff;border:1px solid #d3cfc3;box-shadow:1px 5px 14px rgba(0,0,0,.42)"></div><div style="position:absolute;left:448px;top:367px;width:186px;height:29px;background:#d9ebf7"></div><svg style="position:absolute;left:460px;top:315.7px;overflow:visible" width="13" height="13" viewBox="0 0 13 13" fill="#333" stroke="none"><path transform="scale(0.9285714285714286)" fill-rule="evenodd" fill="#111" d="M7 0L14 7L7 14L0 7Z M3.6 3.8H5.8V6H3.6Z M8.2 3.8H10.4V6H8.2Z M3.6 8H5.8V10.2H3.6Z M8.2 8H10.4V10.2H8.2Z"/></svg><div style="position:absolute;left:478.50px;top:315px;font:normal 14px 'Liberation Sans', sans-serif;line-height:16px;color:#222;white-space:nowrap;letter-spacing:-0.060px">Move</div><svg style="position:absolute;left:459.5px;top:344px;overflow:visible" width="14" height="16" viewBox="0 0 14 16" fill="#333" stroke="none"><path d="M5 1.7H9.6L12.3 4.4V11H5Z M9.3 1.7V4.2H12.3" fill="none" stroke="#111" stroke-width="1.25" stroke-linejoin="round"/><path d="M4.7 3.7H1.7V14.1H8.4V11.4" fill="none" stroke="#111" stroke-width="1.25" stroke-linejoin="round"/></svg><div style="position:absolute;left:475.60px;top:344px;font:normal 14px 'Liberation Sans', sans-serif;line-height:16px;color:#222;white-space:nowrap;letter-spacing:-0.120px">Copy</div><svg style="position:absolute;left:460px;top:374.2px;overflow:visible" width="11" height="14" viewBox="0 0 11 14" fill="#333" stroke="none"><path fill="#333" d="M0 0.3Q0 0 .3 0H5.8V4.3H10.9V13.6Q10.9 13.9 10.6 13.9H.3Q0 13.9 0 13.6Z M7.6 0L10.9 3.1H7.6Z"/></svg><div style="position:absolute;left:474.00px;top:373px;font:normal 14px 'Liberation Sans', sans-serif;line-height:16px;color:#333;white-space:nowrap;letter-spacing:0.000px">Rename</div><svg style="position:absolute;left:460.1px;top:403.3px;overflow:visible" width="14" height="14" viewBox="0 0 14 14" fill="#333" stroke="none"><circle cx="9.55" cy="4.5" r="4.4" fill="#111"/><circle cx="10.8" cy="3.6" r="1.25" fill="#fff"/><path fill="#111" d="M0 10.8L6.2 4.6L9.4 7.8L6.8 10.4V11.2H5.8L3.1 13.9H0Z"/></svg><div style="position:absolute;left:478.50px;top:402px;font:normal 14px 'Liberation Sans', sans-serif;line-height:16px;color:#222;white-space:nowrap;letter-spacing:0.086px">Change Permissions</div><svg style="position:absolute;left:461px;top:432.5px;overflow:visible" width="12" height="12" viewBox="0 0 12 12" fill="#333" stroke="none"><path d="M1.7 1.6L10.4 9.9 M10.4 1.6L1.7 9.9" fill="none" stroke="#111" stroke-width="3.2" /></svg><div style="position:absolute;left:478.50px;top:431px;font:normal 14px 'Liberation Sans', sans-serif;line-height:16px;color:#222;white-space:nowrap;letter-spacing:0.036px">Delete</div><svg style="position:absolute;left:461px;top:461px;overflow:visible" width="12" height="12" viewBox="0 0 12 12" fill="#333" stroke="none"><path fill="#111" d="M6.2 1.7V5.8H10.1Z M1.9 6H5.7V9.9Z"/><path d="M10.8 1L7 4.8 M0.9 10.6L4.6 6.9" fill="none" stroke="#111" stroke-width="2.1" stroke-linecap="round"/></svg><div style="position:absolute;left:478.10px;top:460px;font:normal 14px 'Liberation Sans', sans-serif;line-height:16px;color:#222;white-space:nowrap;letter-spacing:0.130px">Compress</div><svg style="position:absolute;left:460.2px;top:489.8px;overflow:visible" width="12" height="14" viewBox="0 0 12 14" fill="#333" stroke="none"><path d="M3 6.5V4.2A2.9 2.9 0 0 1 8.8 4.2V6.5" fill="none" stroke="#111" stroke-width="1.9" /><rect x="0" y="6.2" width="11.8" height="7.7" rx="0.8" fill="#111"/></svg><div style="position:absolute;left:476.40px;top:489px;font:normal 14px 'Liberation Sans', sans-serif;line-height:16px;color:#222;white-space:nowrap;letter-spacing:0.120px">Password Protect</div><svg style="position:absolute;left:460.3px;top:518.8px;overflow:visible" width="14" height="14" viewBox="0 0 14 14" fill="#333" stroke="none"><path fill="#111" d="M6.6 0L13.3 2.2Q13.5 10 6.6 13.8Q-0.2 10 0 2.2Z"/><path fill="#fff" d="M6.9 1.7L11.8 3.3Q11.8 9.5 6.9 12.1Z"/></svg><div style="position:absolute;left:478.50px;top:518px;font:normal 14px 'Liberation Sans', sans-serif;line-height:16px;color:#222;white-space:nowrap;letter-spacing:0.039px">Leech Protect</div><svg style="position:absolute;left:459.8px;top:547.8px;overflow:visible" width="15" height="14" viewBox="0 0 15 14" fill="#333" stroke="none"><path fill="#111" d="M14.4 3.5L11.7 5.7L9.3 5L8.6 2.6L11 0.1Q7.8 -0.5 6.2 2.2Q5.5 3.7 6.1 5.1L0.6 11.3Q-0.4 12.6 0.9 13.7Q2.1 14.6 3.1 13.5L8.7 8.2Q10.7 8.8 12.3 7.7Q14.4 6.3 14.4 3.5Z"/></svg><div style="position:absolute;left:478.50px;top:547px;font:normal 14px 'Liberation Sans', sans-serif;line-height:16px;color:#222;white-space:nowrap;letter-spacing:0.152px">Manage Indices</div><svg style="position:absolute;left:0;top:0" width="1247" height="781" viewBox="0 0 1247 781"><rect x="329.7" y="283.7" width="119.5" height="36.2" fill="none" stroke="#e3161b" stroke-width="3.4"/><rect x="444.9" y="363.7" width="191.5" height="34.5" fill="none" stroke="#e3161b" stroke-width="3.4"/><rect x="44.7" y="588.3" width="126.5" height="22.5" fill="none" stroke="#e3161b" stroke-width="3.4"/><path d="M171.5 588.5L318 336" stroke="#e3161b" stroke-width="3"/><path d="M325.5 323.5L311 333L324 340.5z" fill="#e3161b"/></svg></body></html>
